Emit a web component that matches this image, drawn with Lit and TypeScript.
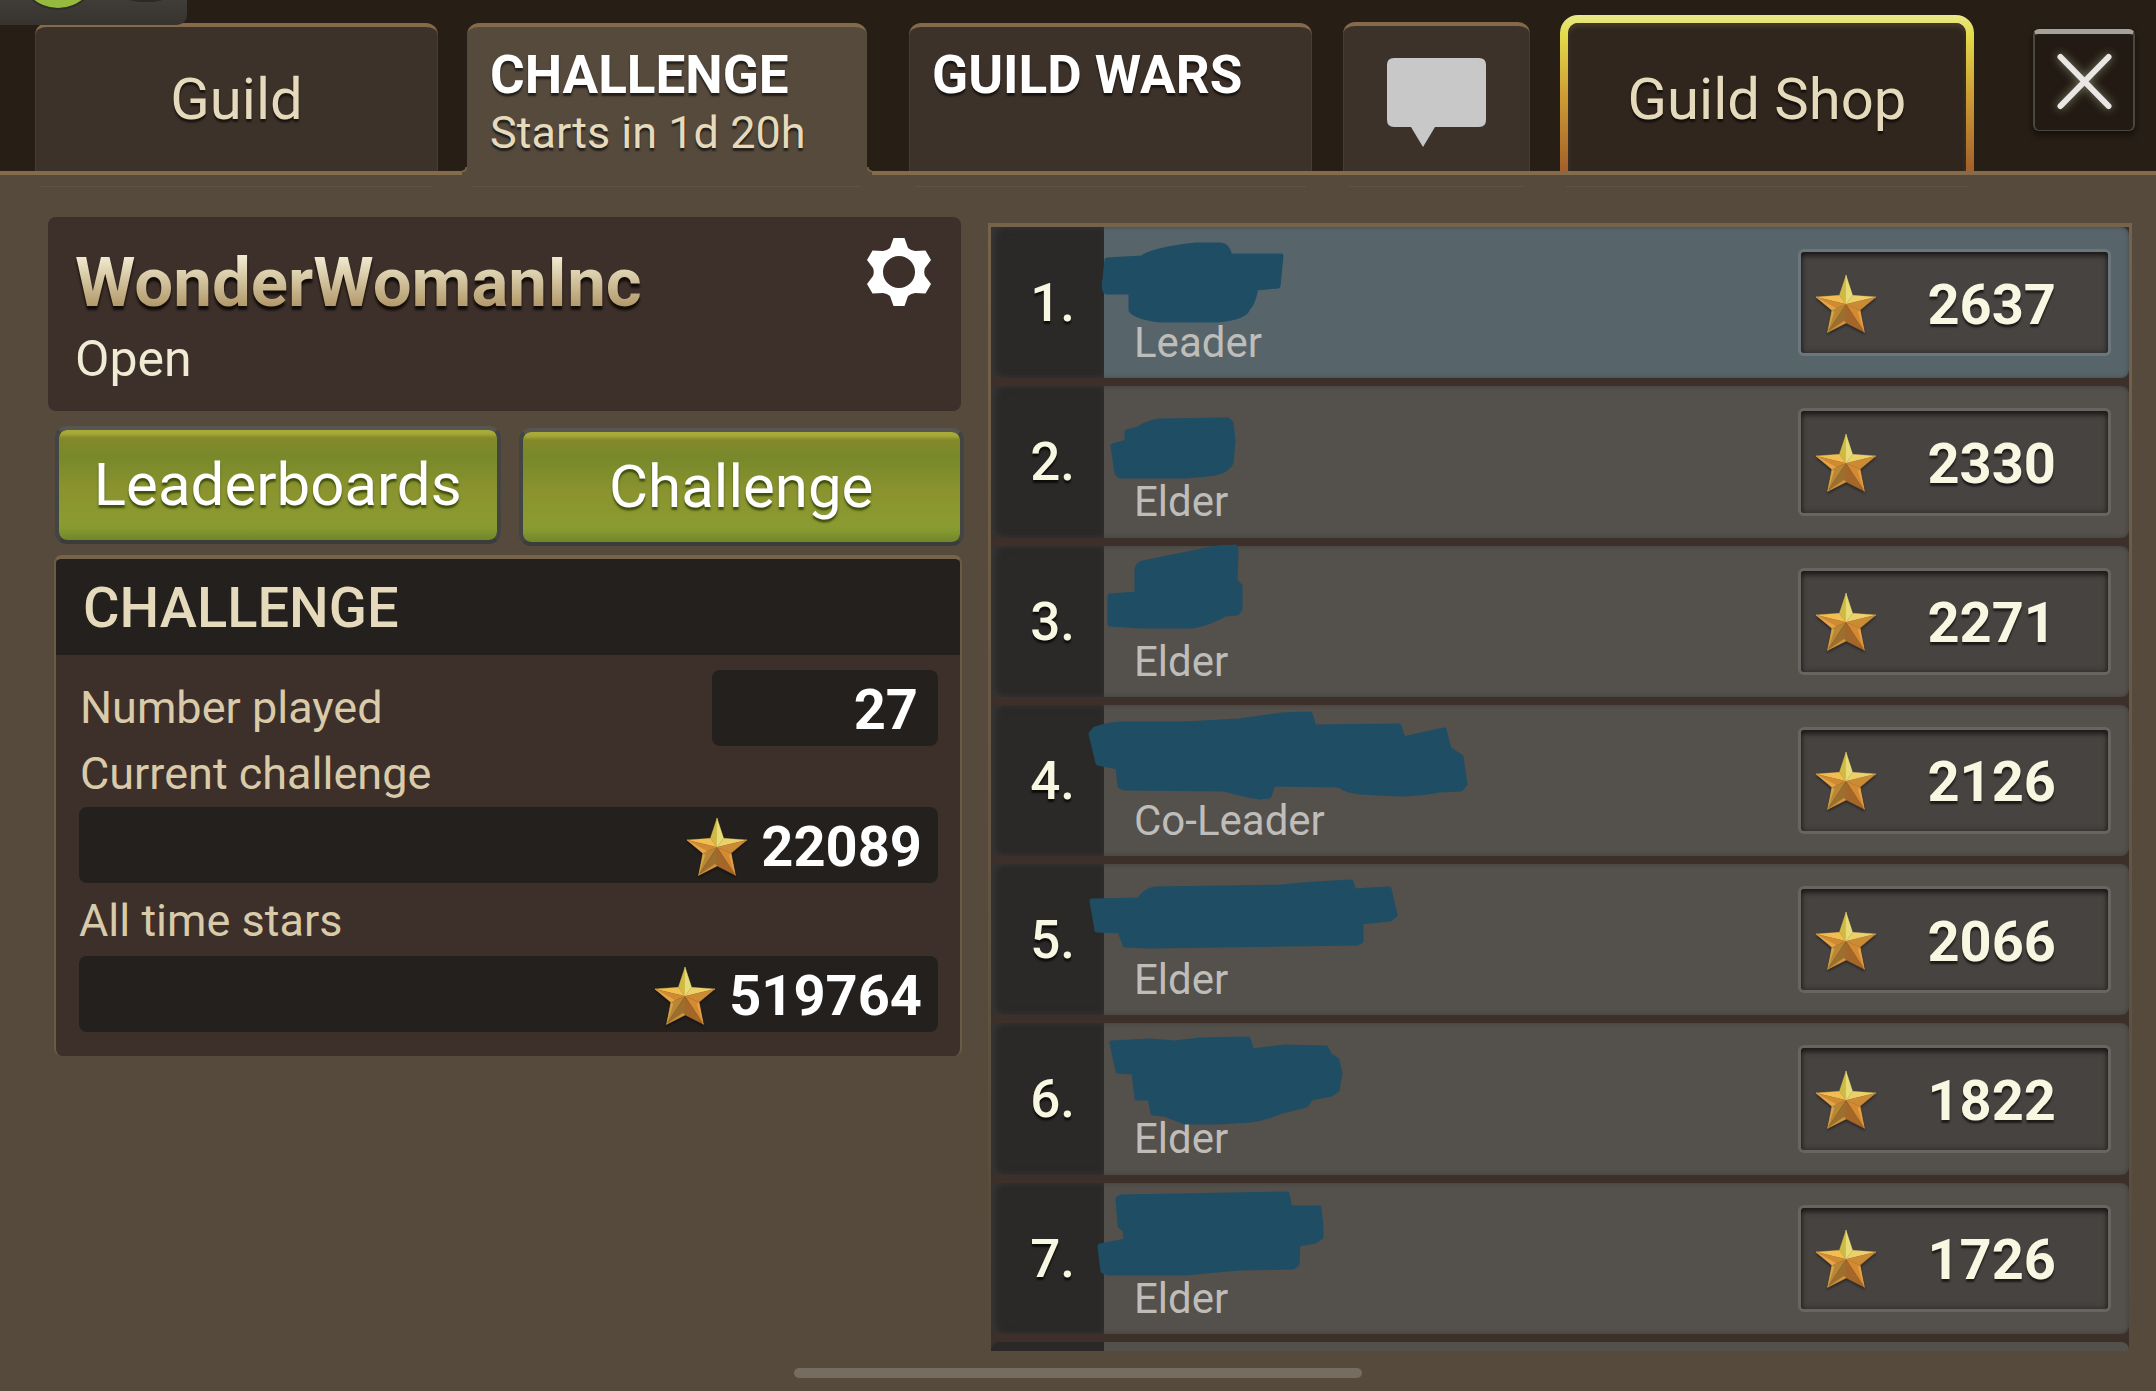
import { LitElement, html, css, svg } from "lit";
import { customElement, property } from "lit/decorators.js";
import { classMap } from "lit/directives/class-map.js";

interface Member {
  rank: number;
  role: string;
  stars: number;
  /** Outline of the marker stroke that covers the member's name. */
  cover: string;
}

const MEMBERS: Member[] = [
  {
    rank: 1,
    role: "Leader",
    stars: 2637,
    cover:
      "M22 32 L57 30 Q66 22 111 17 L136 17 Q143 18 145 28 L196 28 L193 58 L171 60 Q168 76 163 80 Q160 90 132 92 L75 92 Q50 89 46 82 L46 64 L22 64 Q18 64 20 50 Z",
  },
  {
    rank: 2,
    role: "Elder",
    stars: 2330,
    cover:
      "M28 59 L42 55 L42 45 L53 42 Q62 36 74 34 L143 33 L146 36 L148 54 L146 76 Q142 84 130 86 Q116 88 100 89 L35 89 L32 86 Z",
  },
  {
    rank: 3,
    role: "Elder",
    stars: 2271,
    cover:
      "M25 49 L52 47 L52 22 Q53 17 58 16 L132 1 L150 0 L151 3 L150 34 L155 39 L155 62 L152 66 L140 67 Q124 76 107 79 L57 79 L25 77 Z",
  },
  {
    rank: 4,
    role: "Co-Leader",
    stars: 2126,
    cover:
      "M6 28 L10 23 Q24 18 40 18 L100 18 L154 15 Q176 12 197 9 L225 8 L229 21 L314 20 L318 33 L359 24 L364 43 L376 51 L380 78 L376 83 L354 84 Q334 88 315 88 L275 86 Q260 84 254 79 L188 78 L184 90 L175 91 Q156 88 140 83 L39 82 L35 80 L33 61 L13 57 Z",
  },
  {
    rank: 5,
    role: "Elder",
    stars: 2066,
    cover:
      "M7 36 L54 35 Q60 26 70 24 L197 22 Q214 20 232 19 L266 17 L269 26 L304 24 L310 50 L305 54 L276 57 L276 76 L272 78 L65 81 L40 80 L35 66 L12 65 Z",
  },
  {
    rank: 6,
    role: "Elder",
    stars: 1822,
    cover:
      "M27 19 L65 17 L90 19 L115 16 L163 15 L167 27 L200 23 L241 24 L245 32 L252 36 L255 49 L252 66 L246 70 L226 74 L221 81 L197 87 Q180 94 165 96 L132 98 L100 98 L79 90 L68 89 L65 74 L52 74 L49 48 L33 47 Z",
  },
  {
    rank: 7,
    role: "Elder",
    stars: 1726,
    cover:
      "M33 15 L36 13 L202 10 L205 24 L234 24 L236 43 L236 53 L230 57 L213 60 L212 80 L208 83 L154 84 L100 89 L23 89 L18 87 L15 62 L41 57 L40 46 L35 42 Z",
  },
];

@customElement("gold-star")
export class GoldStar extends LitElement {
  static styles = css`
    :host {
      display: block;
      flex: none;
      width: 60px;
      height: 58px;
    }
    .star {
      display: block;
      width: 100%;
      height: 100%;
      overflow: visible;
      filter: drop-shadow(0 2px 1px rgba(0, 0, 0, 0.4));
    }
  `;

  render() {
    const facets: [string, string][] = [
      ["90,0 70,61 90,88", "#cfba45"],
      ["90,0 110,61 90,88", "#e6dc78"],
      ["0,66 70,61 90,88", "#f0bf50"],
      ["0,66 90,88 48,106", "#d18a34"],
      ["180,66 110,61 90,88", "#ecd06a"],
      ["180,66 90,88 132,106", "#cb8b35"],
      ["35,172 48,106 90,88", "#b98634"],
      ["35,172 90,88 90,144", "#9c6f2e"],
      ["145,172 132,106 90,88", "#d38a31"],
      ["145,172 90,88 90,144", "#a5662a"],
      ["35,172 48,106 54,112", "#d9a54a"],
      ["0,66 48,106 60,100", "#e3a548"],
      ["145,172 132,106 126,112", "#e8a24a"],
      ["35,172 90,144 84,138", "#cf9440"],
    ];
    return html`<svg class="star" viewBox="0 0 180 174" aria-hidden="true">
      ${facets.map(
        ([points, fill]) =>
          svg`<polygon points=${points} fill=${fill} stroke=${fill} stroke-width="1"></polygon>`
      )}
    </svg>`;
  }
}

@customElement("member-row")
export class MemberRow extends LitElement {
  @property({ attribute: false }) member!: Member;

  static styles = css`
    :host {
      display: block;
      height: 100%;
    }
    .row {
      position: relative;
      display: flex;
      height: 100%;
      border-radius: 8px;
      background: #54504c;
      box-shadow: inset 0 0 4px rgba(40, 40, 40, 0.5);
    }
    .leader {
      background: #57656b;
    }
    .rank {
      flex: none;
      box-sizing: border-box;
      width: 113px;
      padding: 44px 29px 0 0;
      border-radius: 8px 0 0 8px;
      background: #2b2927;
      box-shadow: inset 6px 0 8px -2px #363636, inset 0 0 6px #343332;
      color: #f8f8e2;
      font-size: 53px;
      font-weight: 500;
      line-height: 64px;
      text-align: right;
      text-shadow: 0 3px 2px rgba(0, 0, 0, 0.7);
    }
    .who {
      flex: 1;
      padding: 92px 0 0 30px;
      color: #bfbdb9;
      font-size: 42px;
      line-height: 48px;
    }
    .cover {
      position: absolute;
      left: 94px;
      top: 1px;
      width: 400px;
      height: 110px;
      overflow: visible;
    }
    .score {
      flex: none;
      display: flex;
      align-items: center;
      box-sizing: border-box;
      width: 313px;
      margin: 22px 18px 22px 0;
      padding: 2px 52px 0 15px;
      border: 3px solid rgba(255, 255, 255, 0.12);
      border-radius: 6px;
      background: #474340;
      background-clip: padding-box;
      box-shadow: inset 0 4px 5px rgba(0, 0, 0, 0.5),
        inset 0 0 6px rgba(0, 0, 0, 0.4);
    }
    .value {
      flex: 1;
      padding-top: 2px;
      color: #f8f8e2;
      font-size: 56px;
      font-weight: 700;
      line-height: 64px;
      text-align: right;
      text-shadow: 0 3px 2px rgba(0, 0, 0, 0.6);
    }
  `;

  render() {
    const m = this.member;
    return html`<div class=${classMap({ row: true, leader: m.rank === 1 })}>
      <div class="rank">${m.rank}.</div>
      <div class="who">${m.role}</div>
      <div class="score">
        <gold-star></gold-star>
        <span class="value">${m.stars}</span>
      </div>
      <svg class="cover" viewBox="0 0 400 110" aria-hidden="true">
        <path
          d=${m.cover}
          fill="#1f4d64"
          stroke="#1f4d64"
          stroke-width="5"
          stroke-linejoin="round"
        ></path>
      </svg>
    </div>`;
  }
}

@customElement("app-root")
export class AppRoot extends LitElement {
  static styles = css`
    :host {
      display: block;
      font-family: Roboto, "Liberation Sans", sans-serif;
    }
    button {
      margin: 0;
      padding: 0;
      border: 0;
      background: none;
      color: inherit;
      font: inherit;
      cursor: pointer;
    }
    h1,
    h2,
    p,
    ol,
    dl,
    dd {
      margin: 0;
      padding: 0;
    }
    .page {
      position: relative;
      display: flex;
      flex-direction: column;
      box-sizing: border-box;
      min-height: 100vh;
      background: #564a3d;
      overflow: hidden;
    }

    /* Tab bar */
    .bar {
      display: grid;
      grid-template-columns:
        minmax(0, 403fr) minmax(0, 400fr) minmax(0, 416fr)
        minmax(0, 189fr) minmax(0, 415fr) 132px;
      column-gap: 29px;
      align-items: end;
      height: 171px;
      padding: 0 21px 0 35px;
      border-bottom: 4px solid #846b4b;
      background: #271e15;
    }
    .tab {
      position: relative;
      box-sizing: border-box;
      height: 148px;
      border: solid #84694b;
      border-width: 4px 0 0;
      border-radius: 12px 12px 0 0;
      background: #3d322a;
      box-shadow: inset 1px 0 #4a3c2f, inset -1px 0 #4a3c2f;
      color: #e6dabc;
      font-size: 58px;
      line-height: 68px;
      text-shadow: 0 3px 2px rgba(0, 0, 0, 0.6);
    }
    .tab::after {
      content: "";
      position: absolute;
      left: 6px;
      right: 6px;
      bottom: -16px;
      height: 1px;
      background: #5f5346;
    }
    .split {
      display: flex;
      flex-direction: column;
      align-items: flex-start;
      padding: 16px 0 0 23px;
      text-align: left;
    }
    .split strong {
      color: #fff;
      font-size: 53px;
      line-height: 64px;
    }
    .split span {
      font-size: 45px;
      line-height: 52px;
    }
    .current {
      height: 152px;
      margin-bottom: -4px;
      background: #564a3d;
      box-shadow: none;
    }
    .current::before {
      content: "";
      position: absolute;
      left: -5px;
      right: -5px;
      bottom: 0;
      height: 8px;
      background: radial-gradient(
            circle at 0 0,
            transparent 3px,
            #846b4b 4px,
            #564a3d 6px
          )
          left / 5px 8px no-repeat,
        radial-gradient(
            circle at 100% 0,
            transparent 3px,
            #846b4b 4px,
            #564a3d 6px
          )
          right / 5px 8px no-repeat;
    }
    .current::after {
      bottom: -12px;
    }
    .wars {
      margin-left: 13px;
    }
    .chat {
      height: 149px;
      margin-left: 2px;
    }
    .chat svg {
      display: block;
      width: 99px;
      height: 90px;
      margin: 8px auto 0;
    }
    .shop {
      height: 156px;
      margin-left: 1px;
      padding: 8px 8px 0;
      border: 0;
      border-radius: 18px 18px 0 0;
      background: linear-gradient(
        #e9e88c,
        #e4dd4a 12%,
        #cf9f35 50%,
        #a3602a
      );
      box-shadow: none;
    }
    .shop span {
      display: flex;
      align-items: center;
      justify-content: center;
      box-sizing: border-box;
      height: 100%;
      padding-top: 4px;
      border-radius: 10px 10px 0 0;
      background: #30261e;
      box-shadow: inset 0 4px 4px #43392a;
    }
    .close {
      justify-self: end;
      width: 102px;
      height: 102px;
      margin-bottom: 40px;
      box-sizing: border-box;
      border: solid #4b463e;
      border-width: 5px 2px 1px;
      border-top-color: #a5a19d;
      border-radius: 6px;
      background: #231b13;
      box-shadow: 0 4px 6px rgba(0, 0, 0, 0.5);
    }
    .close svg {
      display: block;
      width: 100%;
      height: 100%;
      filter: drop-shadow(0 0 5px rgba(190, 200, 170, 0.6));
    }
    .pill {
      position: absolute;
      z-index: 2;
      left: 0;
      top: 0;
      width: 187px;
      height: 25px;
      overflow: hidden;
      border-radius: 0 0 10px 0;
      background: linear-gradient(#403c38, #37342f);
    }
    .pill svg {
      display: block;
    }

    /* Body columns */
    .body {
      flex: 1;
      display: grid;
      grid-template-columns: minmax(0, 916fr) minmax(0, 1144fr);
      column-gap: 24px;
      padding: 42px 24px 40px 48px;
    }
    .guild {
      display: flex;
      justify-content: space-between;
      align-items: flex-start;
      box-sizing: border-box;
      height: 194px;
      margin-right: 3px;
      padding: 20px 28px 0 27px;
      border-radius: 8px;
      background: #3d2f29;
    }
    .name {
      padding-top: 2px;
      background: linear-gradient(#f0ebd0 22%, #ad9160 82%);
      background-clip: text;
      -webkit-background-clip: text;
      color: transparent;
      filter: drop-shadow(0 4px 1px #120c08);
      font-size: 69px;
      font-weight: 700;
      line-height: 88px;
    }
    .status {
      color: #efebd4;
      font-size: 50px;
      line-height: 64px;
    }
    .gear {
      width: 68px;
      height: 70px;
    }
    .gear svg {
      display: block;
      width: 100%;
      height: 100%;
    }
    .actions {
      display: flex;
      gap: 18px;
      padding: 15px 0 0 7px;
    }
    .action {
      flex: 1 1 0;
      height: 118px;
      box-sizing: border-box;
      border: 4px solid #434444;
      border-top-color: #565551;
      border-bottom-color: #3a3d3a;
      border-radius: 12px;
      background: linear-gradient(
        #aaac3a,
        #a4a636 4px,
        #84892a 8px,
        #77892b 26px,
        #8b932e 60px,
        #8a9b31 92px,
        #879a30 98px,
        #6f862b
      );
      background-clip: padding-box;
      background-origin: padding-box;
      color: #fff;
      font-size: 60px;
      line-height: 72px;
      text-shadow: 0 3px 2px rgba(40, 55, 0, 0.75);
    }
    .action + .action {
      margin: 2px 0 -2px;
    }

    .stats {
      margin: 11px 2px 0 6px;
      border: solid #6b5b46;
      border-width: 4px 2px 0;
      border-top-color: #75644a;
      border-radius: 8px;
      background: #3d2f29;
      overflow: hidden;
    }
    .stats h2 {
      height: 96px;
      padding-left: 27px;
      background: #24201d;
      color: #e6dabc;
      font-size: 56px;
      font-weight: 500;
      line-height: 98px;
    }
    .stats dl {
      display: grid;
      grid-template-columns: 1fr 226px;
      padding: 15px 22px 24px 23px;
      color: #d9cba9;
    }
    .stats dt {
      padding-left: 1px;
      font-size: 45px;
      line-height: 76px;
    }
    .wide {
      grid-column: 1 / -1;
    }
    .stats dt.wide {
      padding-bottom: 5px;
      line-height: 56px;
    }
    .stats dt.last {
      padding: 3px 0 0;
      line-height: 70px;
    }
    .stats dd {
      display: flex;
      align-items: center;
      justify-content: flex-end;
      gap: 14px;
      height: 76px;
      box-sizing: border-box;
      padding: 3px 20px 0 0;
      border-radius: 8px;
      background: #24201d;
      color: #fff;
      font-size: 56px;
      font-weight: 700;
      line-height: 76px;
    }
    .stats dd.wide {
      padding-right: 16px;
    }

    .members {
      display: flex;
      flex-direction: column;
      gap: 8px;
      margin-top: 6px;
      border: solid #75644a;
      border-width: 4px 3px 0;
      border-image: linear-gradient(#75644a, #564a3d) 4 3 0;
      background: #3d2f29;
      background-clip: padding-box;
      list-style: none;
    }
    .members li {
      flex: 1;
      min-height: 150px;
    }
    .members .next {
      flex: none;
      min-height: 9px;
      border-radius: 8px 8px 0 0;
      background: linear-gradient(90deg, #2b2927 113px, #54504c 113px);
    }
    .home {
      position: absolute;
      left: 50%;
      bottom: 13px;
      width: 568px;
      height: 10px;
      margin-left: -284px;
      border-radius: 5px;
      background: #776c60;
    }
  `;

  render() {
    return html`<main class="page">
      <nav class="bar">
        <button class="tab">Guild</button>
        <button class="tab split current" aria-current="page">
          <strong>CHALLENGE</strong>
          <span>Starts in 1d 20h</span>
        </button>
        <button class="tab split wars"><strong>GUILD WARS</strong></button>
        <button class="tab chat" aria-label="Chat">
          <svg viewBox="0 0 99 90">
            <path
              d="M7 0H92Q99 0 99 7V62Q99 69 92 69H48L36 89L24 69H7Q0 69 0 62V7Q0 0 7 0Z"
              fill="#c8c8c8"
            ></path>
          </svg>
        </button>
        <button class="tab shop"><span>Guild Shop</span></button>
        <button class="close" aria-label="Close">
          <svg viewBox="0 0 97 96">
            <path
              d="M25 23L73 72M73 23L25 72"
              stroke="#e9e6e3"
              stroke-width="6"
              stroke-linecap="round"
            ></path>
          </svg>
        </button>
      </nav>
      <div class="pill">
        <svg width="187" height="25">
          <ellipse cx="146" cy="-6" rx="26" ry="8" fill="#2c2a27"></ellipse>
          <circle cx="58" cy="-30" r="40" fill="#2f2d29"></circle>
          <circle cx="58" cy="-31" r="39" fill="#96ba3e"></circle>
        </svg>
      </div>

      <div class="body">
        <section class="side">
          <div class="guild">
            <div>
              <h1 class="name">WonderWomanInc</h1>
              <p class="status">Open</p>
            </div>
            <button class="gear" aria-label="Guild settings">
              <svg viewBox="-34 -35 68 70">
                <path
                  fill="#fff"
                  fill-rule="evenodd"
                  d="M-5.5 -34H5.5L9 -24Q12 -21.500 16 -21L26.500 -21.500L32 -12L26 -4Q24.500 0 26 4L32 12L26.500 21.500L16 21Q12 21.500 9 24L5.500 34H-5.500L-9 24Q-12 21.500 -16 21L-26.500 21.500L-32 12L-26 4Q-24.500 0 -26 -4L-32 -12L-26.500 -21.500L-16 -21Q-12 -21.500 -9 -24ZM0 -16A16 16 0 1 0 0 16A16 16 0 1 0 0 -16Z"
                ></path>
              </svg>
            </button>
          </div>
          <div class="actions">
            <button class="action">Leaderboards</button>
            <button class="action">Challenge</button>
          </div>
          <div class="stats">
            <h2>CHALLENGE</h2>
            <dl>
              <dt>Number played</dt>
              <dd>27</dd>
              <dt class="wide">Current challenge</dt>
              <dd class="wide"><gold-star></gold-star>22089</dd>
              <dt class="wide last">All time stars</dt>
              <dd class="wide"><gold-star></gold-star>519764</dd>
            </dl>
          </div>
        </section>

        <ol class="members">
          ${MEMBERS.map(
            (m) => html`<li><member-row .member=${m}></member-row></li>`
          )}
          <li class="next" aria-hidden="true"></li>
        </ol>
      </div>
      <div class="home"></div>
    </main>`;
  }
}
